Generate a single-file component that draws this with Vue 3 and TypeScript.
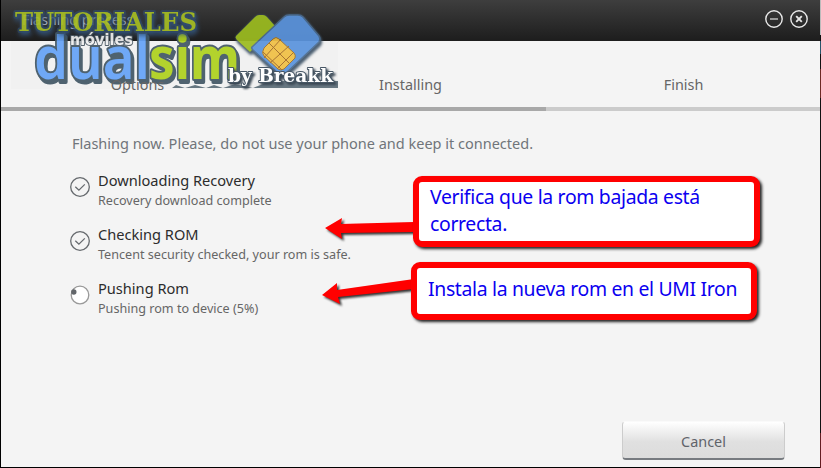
<script setup lang="ts">
interface Step {
    title: string
    detail: string
    done: boolean
}

const tabs: string[] = ['Options', 'Installing', 'Finish']

const steps: Step[] = [
    { title: 'Downloading Recovery', detail: 'Recovery download complete', done: true },
    { title: 'Checking ROM', detail: 'Tencent security checked, your rom is safe.', done: true },
    { title: 'Pushing Rom', detail: 'Pushing rom to device (5%)', done: false },
]

const progress = 66.6
</script>

<template>
    <div class="window">
        <header class="titlebar">
            <span class="title">Flashing process</span>
            <svg class="control" viewBox="0 0 18 18">
                <circle cx="9" cy="9" r="8.2" />
                <path class="minus" d="M5 9h8" />
            </svg>
            <svg class="control" viewBox="0 0 18 18">
                <circle cx="9" cy="9" r="8.2" />
                <path class="cross" d="M6.2 6.2l5.6 5.6M11.8 6.2l-5.6 5.6" />
            </svg>
        </header>

        <nav class="tabs">
            <span v-for="tab in tabs" :key="tab" class="tab">{{ tab }}</span>
        </nav>
        <div class="track">
            <div class="bar" :style="{ width: `${progress}%` }" />
        </div>

        <main class="content">
            <p class="intro">Flashing now. Please, do not use your phone and keep it connected.</p>
            <ul class="steps">
                <li v-for="step in steps" :key="step.title" class="step">
                    <svg class="status" viewBox="0 0 20 20">
                        <template v-if="step.done">
                            <circle cx="10" cy="10" r="9.3" />
                            <path d="M5.3 9.8l3.6 3.4 5.9-5.8" />
                        </template>
                        <template v-else>
                            <circle class="ring" cx="10" cy="10" r="8.8" />
                            <circle class="dot" cx="3.8" cy="7" r="2.7" />
                        </template>
                    </svg>
                    <div>
                        <div class="step-title">{{ step.title }}</div>
                        <div class="step-detail">{{ step.detail }}</div>
                    </div>
                </li>
            </ul>
        </main>

        <footer class="footer">
            <button class="cancel" type="button">Cancel</button>
        </footer>

        <div class="edge" />

        <!-- watermark -->
        <svg class="logo" viewBox="0 0 350 100">
            <rect class="haze" x="11" y="41" width="327" height="48" />
            <g class="cards">
                <path class="green-card" d="M236 36l19-19q2-2 4-2h4q2 0 4 2l8 9-25 26-13-12q-2-2-1-4z" />
                <path class="blue-card" d="M252 47l32-30q2-2 5-2h9q3 0 5 2l16 19q2 3 0 6l-34 32q-3 3-6 0l-26-24q-2-2-1-3z" />
                <path class="chip" d="M264 48l9-9q3-3 6 0l15 14q2 2 1 5l-11 11q-3 2-6 0l-14-13q-3-3 0-8z" />
                <path class="chip-lines" d="M269 43l20 20M263 52l19 18M264 58l17-19M270 63l19-17M277 69l17-17" />
            </g>
            <path class="slate" d="M172 88l4-3 9 3 10-3 11 3 8-3 9 3 12-4 18 4 18-7h67v7z" />
            <g class="brand">
                <text class="green" x="149" y="79" textLength="91" lengthAdjust="spacingAndGlyphs">sim</text>
                <text class="blue" x="34" y="79" textLength="116" lengthAdjust="spacingAndGlyphs">dual</text>
            </g>
            <text class="top" x="15" y="31" textLength="182" lengthAdjust="spacingAndGlyphs">TUTORIALES</text>
            <text class="mobile" x="70" y="45" textLength="63" lengthAdjust="spacingAndGlyphs">móviles</text>
            <text class="author" x="228" y="82" textLength="105" lengthAdjust="spacingAndGlyphs">by Breakk</text>
        </svg>

        <!-- annotation arrows -->
        <svg class="arrows" viewBox="0 0 821 468">
            <path d="M325 228l17-10-1 6 73-2v10l-73 1 1 6z" />
            <path d="M322 295l15-12v7l77-11v10l-76 8 2 7z" />
        </svg>
        <div class="callout first">Verifica que la rom bajada está<br>correcta.</div>
        <div class="callout second">Instala la nueva rom en el UMI Iron</div>
    </div>
</template>

<style>
body {
    background: #f4f4f4;
    overflow: hidden;
}
</style>

<style scoped>
.window {
    position: relative;
    box-sizing: border-box;
    display: flex;
    flex-direction: column;
    width: 821px;
    height: 468px;
    padding-right: 1px;
    border-left: 1px solid #000;
    border-bottom: 1px solid #000;
    background: #f4f4f4;
    font-family: "Noto Sans", sans-serif;
    color: #666;
}

.titlebar {
    display: flex;
    align-items: center;
    gap: 7px;
    height: 41px;
    padding: 0 12px 3px 21px;
    box-sizing: border-box;
    background: linear-gradient(#3e3e3e, #1d1d1d);
}

.title {
    flex: 1;
    font-size: 14.3px;
    color: #b5bac2;
}

.control {
    width: 18px;
    height: 18px;
    fill: none;
    stroke: #e8e8e8;
    stroke-width: 1.4;
}

.control .minus {
    stroke: #999;
    stroke-width: 2;
}

.control .cross {
    stroke-width: 1.9;
}

/* labels stay readable over the watermark */
.tabs {
    position: relative;
    z-index: 1;
    display: grid;
    grid-template-columns: repeat(3, 1fr);
    height: 66px;
    padding-top: 33px;
    box-sizing: border-box;
    text-align: center;
    font-size: 14.4px;
    line-height: 22px;
}

.track {
    height: 4px;
    background: #cbcbcb;
}

.bar {
    height: 100%;
    background: #a8a8a8;
}

.content {
    flex: 1;
    padding: 21px 0 0 71px;
}

.intro {
    margin: 0;
    font-size: 14.5px;
    line-height: 22px;
    color: #70757a;
}

.steps {
    margin: 15px 0 0 -2px;
    padding: 0;
    list-style: none;
}

.step {
    display: flex;
    gap: 8px;
    height: 54px;
}

.status {
    width: 20px;
    height: 20px;
    margin-top: 8px;
    fill: none;
    stroke: #666a6e;
    stroke-width: 1.3;
}

.status .ring {
    fill: #fff;
    stroke: #999;
}

.status .dot {
    fill: #62666a;
    stroke: none;
}

.step-title {
    font-size: 14.6px;
    line-height: 22px;
    color: #2c2c2c;
}

.step-detail {
    font-size: 12.6px;
    line-height: 20px;
}

.footer {
    display: flex;
    justify-content: flex-end;
    padding: 0 35px 7px 0;
}

.cancel {
    width: 163px;
    height: 39px;
    padding: 2px 0 0;
    border: 1px solid #ccc;
    border-top-color: #fafafa;
    border-bottom: 2px solid #777b80;
    border-radius: 4px;
    background: linear-gradient(#fff, #e0e0e0 55%, #dcdcdc);
    font: 14.4px "Noto Sans", sans-serif;
    color: #60636a;
}

.edge {
    position: absolute;
    top: 0;
    right: 0;
    width: 1px;
    height: 468px;
    background: linear-gradient(#bbb 35px, #111 35px 41px, #28566b 41px 54px, #111 54px 69px, #6d2924 69px 98px, #111 98px 433px, #641d22 433px);
}

.logo {
    position: absolute;
    top: 0;
    left: -1px;
    width: 350px;
    height: 100px;
    opacity: 0.93;
}

.haze {
    fill: #efefef;
    opacity: 0.6;
}

.cards {
    filter: drop-shadow(0 0 1px #43576a) drop-shadow(1px 3px 1px #43576a);
}

.slate {
    fill: #4c5f6c;
    opacity: 0.9;
}

.green-card {
    fill: #9cbc20;
}

.blue-card {
    fill: #5b94dd;
    stroke: #4b6c91;
    stroke-width: 1.5px;
}

.chip {
    fill: #f0c045;
    stroke: #9c712e;
}

.chip-lines {
    fill: none;
    stroke: #a36b26;
}

.brand {
    font: 600 60px "Noto Sans", sans-serif;
    stroke: #435866;
    stroke-width: 4px;
    stroke-linejoin: round;
    paint-order: stroke;
    filter: drop-shadow(2px 3px 0 #435866);
}

.blue {
    fill: #65a3f7;
}

.green {
    font-weight: 700;
    fill: #afd11f;
}

.top,
.mobile,
.author {
    paint-order: stroke;
    stroke-linejoin: round;
}

.top {
    font: bold 26px "DejaVu Serif", serif;
    fill: #a6bd24;
    stroke: rgb(50 80 115 / 0.6);
    stroke-width: 4px;
    filter: drop-shadow(1px 3px 2px #34557c);
}

.mobile {
    font: bold 15px "DejaVu Sans", sans-serif;
    fill: #f0f0f0;
    stroke: #4b5964;
    stroke-width: 2px;
}

.author {
    font: bold 19px "DejaVu Serif", serif;
    fill: #fff;
    stroke: #3a4b5b;
    stroke-width: 2px;
    filter: drop-shadow(2px 2px 1px #2d3b48);
}

.arrows {
    position: absolute;
    top: 0;
    left: -1px;
    width: 821px;
    height: 468px;
    fill: #f00;
    filter: drop-shadow(2px 2px 1px #333);
}

.callout {
    position: absolute;
    box-sizing: border-box;
    border: 6px solid #f00;
    border-radius: 9px;
    background: #fff;
    box-shadow: 2px 2px 3px #222;
    font-size: 19.4px;
    line-height: 27px;
    letter-spacing: -0.33px;
    white-space: nowrap;
    color: #0b00f0;
}

.first {
    top: 176px;
    left: 412px;
    width: 347px;
    height: 71px;
    padding: 1px 11px;
}

.second {
    top: 262px;
    left: 410px;
    width: 346px;
    height: 58px;
    padding: 7px 11px;
}
</style>
